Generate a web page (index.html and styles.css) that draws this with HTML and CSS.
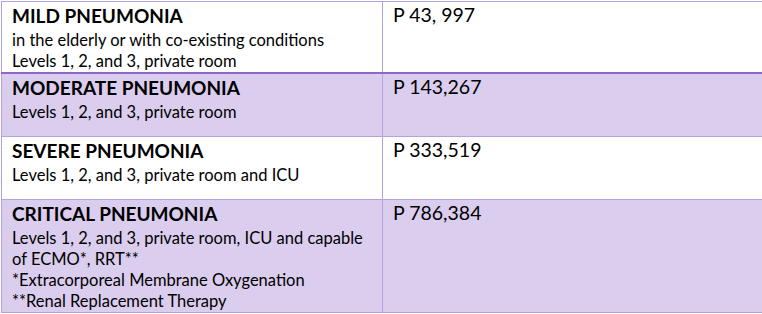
FILE: index.html
```html
<!DOCTYPE html>
<html>
<head>
<meta charset="utf-8">
<link rel="stylesheet" href="styles.css">
</head>
<body>
<table class="costs">
  <colgroup><col class="c-desc"><col class="c-price"></colgroup>
  <tr class="row row-white row-first">
    <td class="desc">
      <div class="title">MILD PNEUMONIA</div>
      <div class="line">in the elderly or with co-existing conditions</div>
      <div class="line">Levels 1, 2, and 3, private room</div>
    </td>
    <td class="price">P 43, 997</td>
  </tr>
  <tr class="row row-purple">
    <td class="desc">
      <div class="title">MODERATE PNEUMONIA</div>
      <div class="line">Levels 1, 2, and 3, private room</div>
    </td>
    <td class="price">P 143,267</td>
  </tr>
  <tr class="row row-white">
    <td class="desc">
      <div class="title">SEVERE PNEUMONIA</div>
      <div class="line">Levels 1, 2, and 3, private room and ICU</div>
    </td>
    <td class="price">P 333,519</td>
  </tr>
  <tr class="row row-purple">
    <td class="desc">
      <div class="title">CRITICAL PNEUMONIA</div>
      <div class="line">Levels 1, 2, and 3, private room, ICU and capable</div>
      <div class="line">of ECMO*, RRT**</div>
      <div class="line">*Extracorporeal Membrane Oxygenation</div>
      <div class="line">**Renal Replacement Therapy</div>
    </td>
    <td class="price">P 786,384</td>
  </tr>
</table>
</body>
</html>
```

FILE: styles.css
```css
html, body {
  margin: 0;
  padding: 0;
  background: #ffffff;
  overflow: hidden;
}
body {
  padding: 1px 0 0 1px;
  font-family: "Lato", "Liberation Sans", sans-serif;
  color: #000000;
}
.costs {
  border-collapse: collapse;
  table-layout: fixed;
  width: 900px;
}
.c-desc { width: 381px; }
.costs td {
  border: 1px solid #b4a2dc;
  vertical-align: top;
  padding: 1px 10px 0 10px;
}
.row-purple td { background: #dbcdee; }
.row td { height: 61px; }
.row-first td { border-bottom: 2px solid #8c69c8; height: 69px; }
.title {
  font-weight: 700;
  font-size: 19px;
  line-height: 25px;
  margin-bottom: 2px;
}
.line {
  font-size: 16.5px;
  line-height: 21px;
}
.price {
  font-size: 19.5px;
  line-height: 24px;
}
```
